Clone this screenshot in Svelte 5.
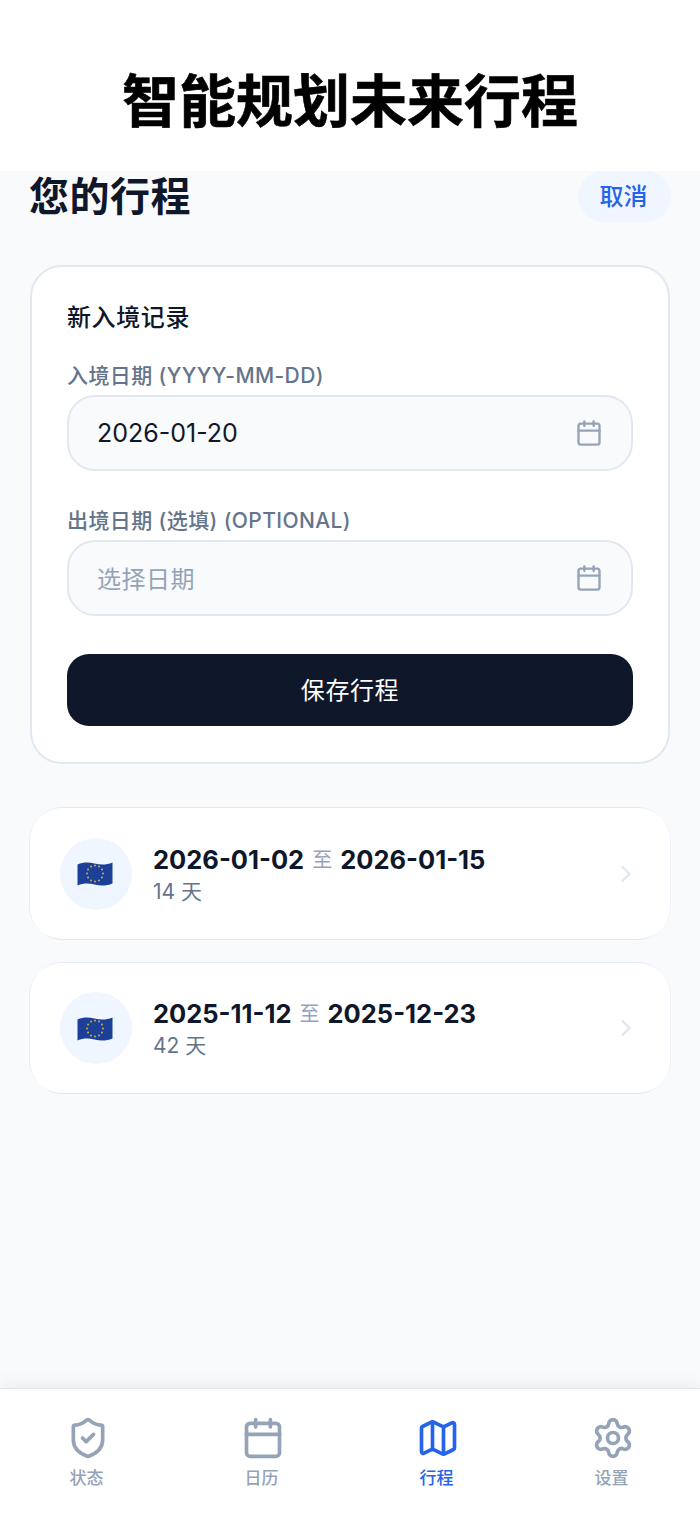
<script>
	const trips = [
		{ from: '2026-01-02', to: '2026-01-15', days: '14 天' },
		{ from: '2025-11-12', to: '2025-12-23', days: '42 天' }
	];
	const stars = Array.from({ length: 12 }, (_, i) => {
		const a = (i * Math.PI) / 6;
		return { x: 18 + Math.sin(a) * 8, y: 13.500 - Math.cos(a) * 8 };
	});
	const tabs = [
		{ key: 'shield', label: '状态' },
		{ key: 'calendar', label: '日历' },
		{ key: 'map', label: '行程', active: true },
		{ key: 'gear', label: '设置' }
	];
</script>

{#snippet calendar(size)}
	<svg width={size} height={size} viewBox="0 0 24 24" fill="none" stroke="currentColor" stroke-width="2" stroke-linecap="round" stroke-linejoin="round">
		<path d="M8 2v4" />
		<path d="M16 2v4" />
		<rect x="3" y="4" width="18" height="18" rx="2" />
		<path d="M3 10h18" />
	</svg>
{/snippet}

{#snippet tabIcon(key)}
	{#if key === 'calendar'}
		{@render calendar(44)}
	{:else}
		<svg width="44" height="44" viewBox="0 0 24 24" fill="none" stroke="currentColor" stroke-width="2" stroke-linecap="round" stroke-linejoin="round">
			{#if key === 'shield'}
				<path d="M20 13c0 5-3.500 7.500-7.660 8.950a1 1 0 0 1-.67-.01C7.500 20.500 4 18 4 13V6a1 1 0 0 1 1-1c2 0 4.500-1.200 6.240-2.720a1.170 1.170 0 0 1 1.520 0C14.510 3.810 17 5 19 5a1 1 0 0 1 1 1z" />
				<path d="m9 12 2 2 4-4" />
			{:else if key === 'map'}
				<path d="M14.106 5.553a2 2 0 0 0 1.788 0l3.659-1.830A1 1 0 0 1 21 4.619v12.764a1 1 0 0 1-.553.894l-4.553 2.277a2 2 0 0 1-1.788 0l-4.212-2.106a2 2 0 0 0-1.788 0l-3.659 1.830A1 1 0 0 1 3 19.381V6.618a1 1 0 0 1 .553-.894l4.553-2.277a2 2 0 0 1 1.788 0z" />
				<path d="M15 5.764v15" />
				<path d="M9 3.236v15" />
			{:else}
				<path d="M9.671 4.136a2.340 2.340 0 0 1 4.659 0 2.340 2.340 0 0 0 3.319 1.915 2.340 2.340 0 0 1 2.330 4.033 2.340 2.340 0 0 0 0 3.831 2.340 2.340 0 0 1-2.330 4.033 2.340 2.340 0 0 0-3.319 1.915 2.340 2.340 0 0 1-4.659 0 2.340 2.340 0 0 0-3.320-1.915 2.340 2.340 0 0 1-2.330-4.033 2.340 2.340 0 0 0 0-3.831A2.340 2.340 0 0 1 6.350 6.051a2.340 2.340 0 0 0 3.319-1.915" />
				<circle cx="12" cy="12" r="3" />
			{/if}
		</svg>
	{/if}
{/snippet}

<div class="page">
	<header class="hero">智能规划未来行程</header>

	<main>
		<div class="head">
			<h1>您的行程</h1>
			<button class="cancel">取消</button>
		</div>

		<section class="card">
			<h2>新入境记录</h2>

			<div class="label">入境日期 (YYYY-MM-DD)</div>
			<div class="input">
				<span>2026-01-20</span>
				{@render calendar(28)}
			</div>

			<div class="label second">出境日期 (选填) (OPTIONAL)</div>
			<div class="input">
				<span class="placeholder">选择日期</span>
				{@render calendar(28)}
			</div>

			<button class="save">保存行程</button>
		</section>

		<div class="trips">
			{#each trips as trip}
				<div class="trip">
					<div class="badge">
						<svg class="flag" width="36" height="27" viewBox="0 0 36 27">
							<path d="M0.500 4.500c6-2.500 11-2.500 17-1s12 1.500 18-1v21c-6 2.500-12 2.500-18 1s-11-1.500-17 1z" fill="#1c4097" />
							{#each stars as s}
								<circle cx={s.x} cy={s.y} r="1" fill="#cfae4a" />
							{/each}
						</svg>
					</div>
					<div class="info">
						<div class="dates">
							<b>{trip.from}</b><span class="to">至</span><b>{trip.to}</b>
						</div>
						<div class="days">{trip.days}</div>
					</div>
					<svg class="chevron" width="28" height="28" viewBox="0 0 24 24" fill="none" stroke="currentColor" stroke-width="2" stroke-linecap="round" stroke-linejoin="round">
						<path d="m9 18 6-6-6-6" />
					</svg>
				</div>
			{/each}
		</div>
	</main>

	<nav>
		{#each tabs as tab}
			<div class="tab" class:active={tab.active}>
				{@render tabIcon(tab.key)}
				<span>{tab.label}</span>
			</div>
		{/each}
	</nav>
</div>

<style>
	:global(body) {
		margin: 0;
		background: #f8fafc;
	}

	.page {
		display: flex;
		flex-direction: column;
		height: 1515px;
		overflow: hidden;
		font-family: Inter, 'Noto Sans CJK SC', sans-serif;
		color: #0f172a;
	}

	.hero {
		flex: none;
		height: 171px;
		padding-top: 23px;
		box-sizing: border-box;
		display: flex;
		align-items: center;
		justify-content: center;
		background: #fff;
		color: #000;
		font-size: 57px;
		font-weight: 700;
		-webkit-text-stroke: 0.6px #000;
	}

	main {
		flex: 1;
		padding: 0 30px;
	}

	.head {
		display: flex;
		align-items: center;
		justify-content: space-between;
		height: 51px;
		margin-bottom: 43px;
	}

	h1 {
		margin: 0 0 0 -1px;
		padding-bottom: 6px;
		font-size: 40px;
		font-weight: 700;
		letter-spacing: 0.5px;
	}

	.cancel {
		width: 93px;
		height: 51px;
		margin-right: -1px;
		border: none;
		border-radius: 26px;
		background: #eff6ff;
		color: #2563eb;
		font: inherit;
		font-size: 24px;
		font-weight: 500;
		padding: 0 2px 4px 0;
	}

	.card {
		height: 499px;
		box-sizing: border-box;
		padding: 34px 35px 0;
		background: #fff;
		border: 2px solid #e2e8f0;
		border-radius: 32px;
	}

	h2 {
		margin: 0 0 26px;
		font-size: 24px;
		line-height: 34px;
		font-weight: 500;
		letter-spacing: 0.6px;
	}

	.label {
		height: 30px;
		margin-bottom: 4px;
		font-size: 21px;
		line-height: 30px;
		font-weight: 500;
		letter-spacing: 0.4px;
		color: #64748b;
	}

	.label.second {
		margin-top: 35px;
	}

	.input {
		height: 76px;
		box-sizing: border-box;
		display: flex;
		align-items: center;
		justify-content: space-between;
		padding: 0 28px;
		background: #f8fafc;
		border: 2px solid #e2e8f0;
		border-radius: 28px;
		font-size: 25px;
		color: #94a3b8;
	}

	.input span {
		color: #0f172a;
	}

	.input .placeholder {
		padding-bottom: 2px;
		color: #94a3b8;
		font-size: 24px;
		letter-spacing: 0.5px;
	}

	.save {
		display: block;
		width: 100%;
		height: 72px;
		margin-top: 38px;
		padding: 0 0 3px;
		border: none;
		border-radius: 22px;
		background: #0f172a;
		color: #fff;
		font: inherit;
		font-size: 24px;
		font-weight: 400;
		letter-spacing: 0.6px;
	}

	.trips {
		display: flex;
		flex-direction: column;
		gap: 24px;
		margin-top: 44px;
	}

	.trip {
		height: 131px;
		box-sizing: border-box;
		display: flex;
		align-items: center;
		gap: 21px;
		padding: 0 30px;
		background: #fff;
		border-radius: 32px;
		box-shadow:
			0 4px 0 -3px #e2e8f0,
			0 -4px 0 -3px #e6ebf3,
			4px 0 0 -3px #eef2f8,
			-4px 0 0 -3px #e9eef5;
	}

	.trip + .trip {
		height: 130px;
	}

	.badge {
		flex: none;
		width: 72px;
		height: 72px;
		display: flex;
		align-items: center;
		justify-content: center;
		border-radius: 50%;
		background: #eff6ff;
	}

	.flag {
		margin-right: 3px;
	}

	.info {
		flex: 1;
	}

	.dates {
		display: flex;
		align-items: center;
		font-size: 25.500px;
		line-height: 36px;
	}

	.dates b {
		font-weight: 700;
	}

	.to {
		margin: 0 8px;
		font-size: 20px;
		color: #94a3b8;
	}

	.days {
		font-size: 21px;
		line-height: 28px;
		color: #64748b;
	}

	.chevron {
		color: #e2e8f0;
	}

	nav {
		flex: none;
		height: 127px;
		box-sizing: border-box;
		display: flex;
		background: #fff;
		border-top: 1px solid #e2e8f0;
		box-shadow: 0 -4px 16px rgba(15, 23, 42, 0.06);
		padding-top: 27px;
	}

	.tab {
		flex: 1;
		display: flex;
		flex-direction: column;
		align-items: center;
		gap: 6px;
		color: #94a3b8;
		font-size: 17px;
		line-height: 24px;
		font-weight: 500;
	}

	.tab span {
		margin-right: 2px;
	}

	.tab.active {
		color: #2563eb;
	}
</style>
